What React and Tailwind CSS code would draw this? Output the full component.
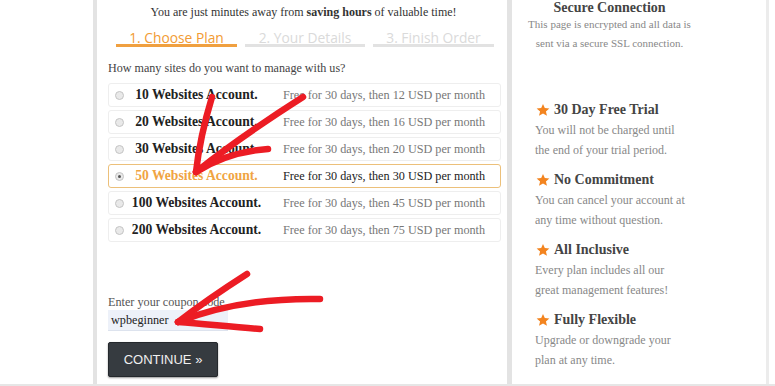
import React from 'react';

const plans = [
	{ sites: 10, price: 12 },
	{ sites: 20, price: 16 },
	{ sites: 30, price: 20 },
	{ sites: 50, price: 30, selected: true },
	{ sites: 100, price: 45 },
	{ sites: 200, price: 75 },
];

const features = [
	{ title: '30 Day Free Trial', lines: [ 'You will not be charged until', 'the end of your trial period.' ] },
	{ title: 'No Commitment', lines: [ 'You can cancel your account at', 'any time without question.' ] },
	{ title: 'All Inclusive', lines: [ 'Every plan includes all our', 'great management features!' ] },
	{ title: 'Fully Flexible', lines: [ 'Upgrade or downgrade your', 'plan at any time.' ] },
];

function Star() {
	return (
		<svg width="14" height="14" viewBox="0 0 24 24" className="shrink-0">
			<path
				d="M12 1.5l3.1 7.2 7.8.6-5.9 5.1 1.8 7.6L12 17.9 5.2 22l1.8-7.6L1.1 9.3l7.8-.6z"
				fill="#f3841f"
			/>
		</svg>
	);
}

function Radio( { checked } ) {
	return (
		<span className="w-[9px] h-[9px] rounded-full border border-[#c4c4c4] bg-[#e9e9e9] flex items-center justify-center shrink-0">
			{ checked && <span className="w-[3px] h-[3px] rounded-full bg-[#555]" /> }
		</span>
	);
}

function PlanRow( { plan } ) {
	const on = plan.selected;
	return (
		<div
			className={ `h-[24px] flex items-center pl-[6px] rounded-[3px] border ${
				on ? 'border-[#ecc07a]' : 'border-[#eeeeee]'
			}` }
		>
			<Radio checked={ on } />
			<span
				className={ `w-[145px] text-center font-bold text-[13.6px] ${
					on ? 'text-[#f0a443]' : 'text-[#222]'
				}` }
			>
				{ plan.sites } Websites Account.
			</span>
			<span className={ `ml-[14px] text-[12.2px] ${ on ? 'text-[#222]' : 'text-[#777]' }` }>
				Free for 30 days, then { plan.price } USD per month
			</span>
		</div>
	);
}

function Arrows() {
	return (
		<svg
			className="absolute inset-0 pointer-events-none"
			width="775"
			height="386"
			viewBox="0 0 775 386"
		>
			<g fill="none" stroke="#ec1c24" strokeWidth="6.5" strokeLinecap="round" strokeLinejoin="round">
				<path d="M303 97 C 270 118, 230 145, 196 172" />
				<path d="M196 172 C 199 145, 205 120, 212 97" />
				<path d="M196 172 C 215 160, 240 151, 268 149" />
				<path d="M178 322 C 220 305, 265 298, 320 299" />
				<path d="M178 322 C 200 305, 222 290, 247 274" />
				<path d="M178 322 C 205 324, 232 327, 260 329" />
			</g>
		</svg>
	);
}

export default function App() {
	return (
		<div className="relative w-[775px] h-[386px] bg-white overflow-hidden font-['Liberation_Serif',serif] border-b-2 border-[#e6e6e6]">
			<div className="flex h-[384px] ml-[93px]">
				<div className="w-[414px] border-l-4 border-[#e3e3e3] pl-[11px] pr-[6px] flex flex-col">
					<p className="text-center text-[12px] leading-[16px] text-[#333] mt-[4px] pr-[2px]">
						You are just minutes away from <b>saving hours</b> of valuable time!
					</p>
					<div className="flex gap-[8px] ml-[8px] mt-[3px] font-['Open_Sans',sans-serif] text-[13.8px]">
						<div className="w-[121px] h-[24px] pt-[9px] leading-[12px] text-center text-[#f29b33] border-b-[3px] border-[#f0a040]">
							1. Choose Plan
						</div>
						<div className="w-[120px] h-[24px] pt-[9px] leading-[12px] text-center text-[#dadada] border-b-[3px] border-[#e2e2e2]">
							2. Your Details
						</div>
						<div className="w-[121px] h-[24px] pt-[9px] leading-[12px] text-center text-[#dadada] border-b-[3px] border-[#e2e2e2]">
							3. Finish Order
						</div>
					</div>
					<p className="text-[12.1px] leading-[16px] text-[#444] mt-[13px]">
						How many sites do you want to manage with us?
					</p>
					<div className="flex flex-col gap-[3px] mt-[7px]">
						{ plans.map( ( p ) => (
							<PlanRow key={ p.sites } plan={ p } />
						) ) }
					</div>
					<p className="text-[12.2px] text-[#555] mt-[52px] leading-[16px]">
						Enter your coupon code
					</p>
					<div className="w-[120px] h-[21px] bg-[#edf1f9] border-b border-[#dde3ee] text-[12.2px] text-[#222] pl-[3px] leading-[20px]">
						wpbeginner
					</div>
					<button
						type="button"
						className="mt-[11px] w-[110px] h-[35px] bg-[#363b40] border border-[#24282c] rounded-[2px] shadow-[0_1px_2px_rgba(0,0,0,0.4)] text-[#f0f0f0] font-['Liberation_Sans',sans-serif] text-[13px] flex items-center justify-center"
					>
						CONTINUE »
					</button>
				</div>
				<div className="w-[5px] bg-[#e3e3e3]" />
				<div className="w-[257px] border-r-[3px] border-[#ececec]">
					<div className="w-[195px] text-center">
						<p className="font-bold text-[14px] text-[#444] leading-[14px] pt-[1px]">
							Secure Connection
						</p>
						<p className="text-[11px] text-[#888] leading-[19px] mt-[0px]">
							This page is encrypted and all data is
							<br />
							sent via a secure SSL connection.
						</p>
					</div>
					<div className="flex flex-col gap-[10px] mt-[47px] pl-[23px]">
						{ features.map( ( f ) => (
							<div key={ f.title }>
								<div className="flex items-center gap-[4px] pl-[1px]">
									<Star />
									<span className="font-bold text-[14px] text-[#444] leading-[20px]">
										{ f.title }
									</span>
								</div>
								<p className="text-[12px] text-[#888] leading-[20px]">
									{ f.lines[ 0 ] }
									<br />
									{ f.lines[ 1 ] }
								</p>
							</div>
						) ) }
					</div>
				</div>
			</div>
			<Arrows />
		</div>
	);
}
